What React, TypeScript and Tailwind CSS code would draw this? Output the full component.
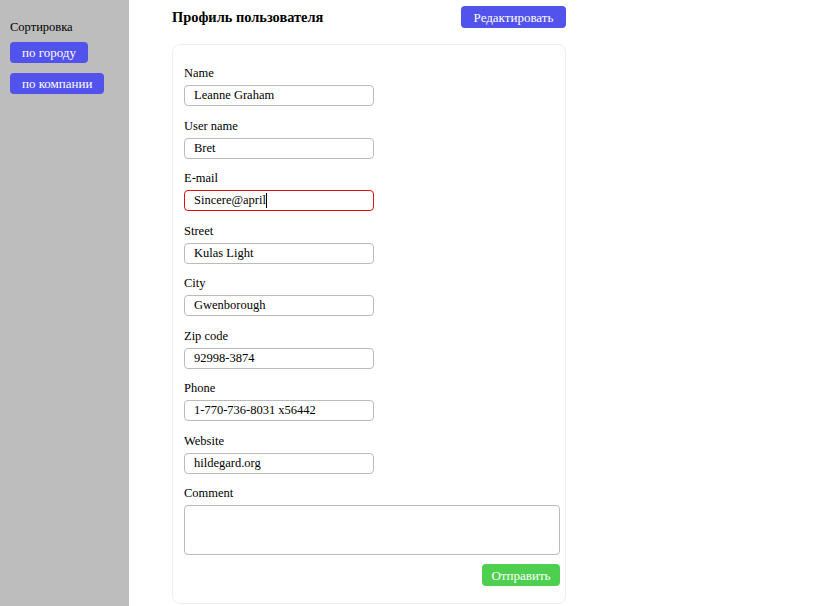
import React from 'react';

const fields = [
  { label: 'Name', value: 'Leanne Graham' },
  { label: 'User name', value: 'Bret' },
  { label: 'E-mail', value: 'Sincere@april', error: true },
  { label: 'Street', value: 'Kulas Light' },
  { label: 'City', value: 'Gwenborough' },
  { label: 'Zip code', value: '92998-3874' },
  { label: 'Phone', value: '1-770-736-8031 x56442' },
  { label: 'Website', value: 'hildegard.org' },
];

const App = () => {
  return (
    <div className="flex min-h-screen bg-white text-[12.5px] text-black font-['Liberation_Serif','Times_New_Roman',serif]">
      <aside className="w-[129px] shrink-0 min-h-screen bg-[#bdbdbd] pl-[10px] pt-[19px]">
        <div className="leading-4 mb-[7px]">Сортировка</div>
        <div className="flex flex-col items-start gap-[10px] text-[13px]">
          <button className="h-[21px] px-[12px] rounded-[4px] bg-[#5252ec] text-white leading-none">по городу</button>
          <button className="h-[21px] px-[12px] rounded-[4px] bg-[#5252ec] text-white leading-none">по компании</button>
        </div>
      </aside>

      <main className="ml-[43px] w-[394px] pt-[6px]">
        <div className="flex items-center justify-between h-[22px]">
          <h1 className="text-[14.4px] font-bold leading-none">Профиль пользователя</h1>
          <button className="h-[22px] w-[105px] rounded-[4px] bg-[#5252ec] text-white text-[13px] leading-none">Редактировать</button>
        </div>

        <form className="mt-[16px] h-[560px] border border-[#eeeeee] rounded-[8px] pl-[11px] pr-[5px] pt-[20px]">
          {fields.map((f) => (
            <div key={f.label} className="h-[52.5px]">
              <label className="block h-4 leading-4 mb-[4px]">{f.label}</label>
              <div className="relative w-[190px]">
                <input
                  readOnly
                  value={f.value}
                  className={
                    f.error
                      ? 'block w-[190px] h-[21px] px-[9px] border border-[#e01010] rounded-[4px] outline-none'
                      : 'block w-[190px] h-[21px] px-[9px] border border-[#bbbbbb] rounded-[4px] outline-none'
                  }
                />
                {f.error && <span className="absolute left-[82px] top-[3px] w-px h-[15px] bg-black" />}
              </div>
            </div>
          ))}
          <div>
            <label className="block h-4 leading-4 mb-[4px]">Comment</label>
            <textarea className="block w-[376px] h-[50px] border border-[#bbbbbb] rounded-[4px] resize-none outline-none" />
            <div className="flex justify-end w-[376px] mt-[9px]">
              <button type="button" className="h-[22px] w-[78px] rounded-[4px] bg-[#4ecf50] text-white text-[13px] leading-none">Отправить</button>
            </div>
          </div>
        </form>
      </main>
    </div>
  );
};

export default App;
